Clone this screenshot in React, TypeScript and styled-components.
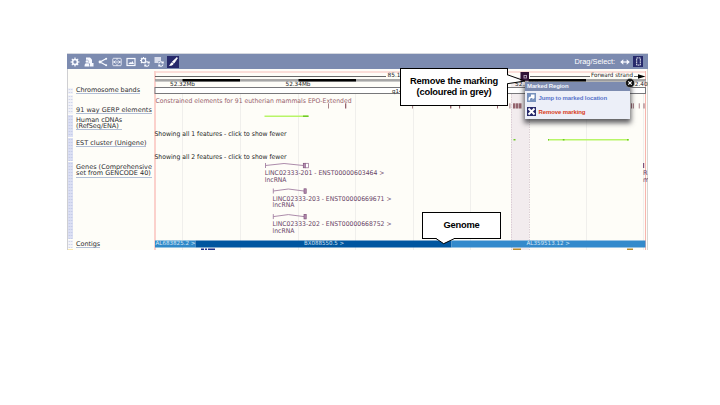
import React from "react";
import styled, { createGlobalStyle } from "styled-components";

const Global = createGlobalStyle`
  * { box-sizing: border-box; }
  body { margin: 0; background: #fff; }
`;

const Page = styled.main`
  width: 720px;
  height: 405px;
  padding: 53px 0 0 67px;
  overflow: hidden;
  background: #fff;
`;
const Browser = styled.section`
  position: relative;
  width: 581px;
  height: 197px;
`;
const Toolbar = styled.header`
  display: flex;
  align-items: center;
  justify-content: space-between;
  height: 16px;
  padding: 0 4px 0 1px;
  border-top: 1px solid #d5d8df;
  background: #7c8bb0;
`;
const Tools = styled.div`
  display: flex;
  align-items: center;
`;
const Tool = styled.button<{ $active?: boolean; $narrow?: boolean }>`
  display: flex;
  align-items: center;
  justify-content: center;
  width: ${(p) => (p.$narrow ? 10 : 12)}px;
  height: ${(p) => (p.$narrow ? 11 : 12)}px;
  margin: 0 1px 0 ${(p) => (p.$narrow ? 1 : 0.95)}px;
  padding: 0;
  border: 0;
  background: ${(p) => (p.$active ? "#26296b" : "transparent")};
`;
const DragLabel = styled.span`
  margin-right: 3px;
  font: 7.4px/12px "Liberation Sans", Arial, sans-serif;
  color: #fff;
`;
const Body = styled.div`
  display: grid;
  grid-template-columns: 6px 81px 494px;
  height: 181px;
  overflow: hidden;
  background: #fefdf8;
`;
const Handles = styled.div`
  display: flex;
  flex-direction: column;
  gap: 1px;
  border-left: 1px solid #cfcfd2;
`;
const Handle = styled.div<{ $h: number; $tone: string; $plain?: boolean }>`
  flex: none;
  height: ${(p) => p.$h}px;
  background-color: ${(p) => p.$tone};
  background-image: ${(p) => (p.$plain ? "none" : "radial-gradient(circle, rgba(176, 184, 220, 0.6) 0.4px, transparent 1px)")};
  background-size: 2.5px 3px;
`;
const Labels = styled.div`
  display: flex;
  flex-direction: column;
  align-items: flex-start;
  padding: 18px 0 0 3px;
`;
const Label = styled.div<{ $gap: number; $spacing?: number }>`
  margin-bottom: ${(p) => p.$gap}px;
  border-bottom: 1px solid #b2bfd6;
  font: 6.5px/6.2px "DejaVu Sans", sans-serif;
  letter-spacing: ${(p) => p.$spacing ?? 0}px;
  white-space: nowrap;
  color: #2d2d32;
`;
const Plot = styled.svg`
  display: block;
`;
const Annotation = styled.text<{ $color?: string; $size?: number }>`
  font-family: "DejaVu Sans", sans-serif;
  font-size: ${(p) => p.$size ?? 6.5}px;
  fill: ${(p) => p.$color ?? "#242424"};
`;
const Popup = styled.aside`
  position: absolute;
  left: 458px;
  top: 29px;
  width: 105px;
  height: 37px;
  background: #eceff8;
  box-shadow: 0 3px 5px 1px rgba(40, 40, 45, 0.75);
`;
const PopupTitle = styled.div`
  height: 9px;
  padding-left: 2px;
  background: #7c8bb0;
  font: bold 6px/9.5px "Liberation Sans", Arial, sans-serif;
  letter-spacing: -0.12px;
  color: #f2f5fc;
`;
const PopupRow = styled.div<{ $color: string; $first?: boolean }>`
  display: flex;
  align-items: center;
  gap: 2.5px;
  height: 14px;
  padding-left: 2px;
  margin-top: ${(p) => (p.$first ? -0.5 : 0)}px;
  font: bold 6px/12px "Liberation Sans", Arial, sans-serif;
  letter-spacing: -0.11px;
  color: ${(p) => p.$color};
  white-space: nowrap;
`;
const Close = styled.svg`
  position: absolute;
  right: -5px;
  top: -4px;
`;
const Callout = styled.div<{ $x: number; $y: number; $w: number; $h: number }>`
  position: absolute;
  left: ${(p) => p.$x}px;
  top: ${(p) => p.$y}px;
  width: ${(p) => p.$w}px;
  height: ${(p) => p.$h}px;
  display: flex;
  align-items: center;
  justify-content: center;
  border: 1px solid #000;
  background: #fff;
  font: bold 9.33px/11px "Liberation Sans", Arial, sans-serif;
  letter-spacing: -0.22px;
  text-align: center;
  color: #000;
`;
const Tail = styled.svg<{ $x: number; $y: number }>`
  position: absolute;
  left: ${(p) => p.$x}px;
  top: ${(p) => p.$y}px;
`;

const Icon = ({ children, size = 10 }: { children: React.ReactNode; size?: number }) => (
  <svg width={size} height={size} viewBox="0 0 10 10" fill="none" stroke="#f7f9ff" strokeWidth="1.2">
    {children}
  </svg>
);

const toolIcons = [
  <>
    <circle cx="5" cy="5" r="2.5" strokeWidth="1.7" />
    <path d="M5 .5v2M5 7.5v2M.5 5h2M7.5 5h2M1.8 1.8l1.4 1.4M6.8 6.8l1.4 1.4M1.8 8.2l1.4-1.4M6.8 3.2l1.4-1.4" />
  </>,
  <>
    <path d="M2 .5h4l2 2v4H4.500L2 5z" fill="#f7f9ff" stroke="none" />
    <path d="M.5 9.500c0-3 1-3.500 2.500-3.500s2.500.5 2.500 3.500zM6 6h3.500v3.500H6z" fill="#f7f9ff" stroke="none" />
    <circle cx="3" cy="4.500" r="1.600" fill="#f7f9ff" stroke="#7c8bb0" strokeWidth=".5" />
  </>,
  <>
    <path d="M8 1.800L2 5l6 3.200" />
    <circle cx="8.200" cy="1.800" r="1" fill="#f7f9ff" stroke="none" />
    <circle cx="2" cy="5" r="1.400" fill="#f7f9ff" stroke="none" />
    <circle cx="8.200" cy="8.200" r="1" fill="#f7f9ff" stroke="none" />
  </>,
  <>
    <rect x=".8" y="1.300" width="8.400" height="7.400" rx=".8" strokeWidth=".8" />
    <path d="M5 1.300v2M5 6.700v2M1 5h8M3.500 3.500L2 5l1.500 1.500M6.500 3.500L8 5 6.500 6.500" strokeWidth=".8" />
  </>,
  <>
    <rect x="1" y="1.500" width="8" height="7" />
    <path d="M2.200 7l2-2 1 .8L6.500 4 8 7z" fill="#f7f9ff" stroke="none" />
  </>,
  <>
    <circle cx="3.500" cy="3.500" r="2.200" />
    <path d="M3.500 0v1.500M0 3.500h1.500M1 1l1.200 1.200M6 1L5 2M1 6l1-1" />
    <path d="M4.800 6.500a2.200 2.200 0 0 1 4-.7M9 7.500a2.200 2.200 0 0 1-4 .8M9.200 4.500V6H7.500M4.800 9.500V8h1.500" strokeWidth="1.1" />
  </>,
  <>
    <path d="M.5 1h6.500M.5 3h6.500M.5 5h4" strokeWidth="1.300" />
    <path d="M4.800 6.500a2.200 2.200 0 0 1 4-.7M9 7.500a2.200 2.200 0 0 1-4 .8M9.200 4.500V6H7.500M4.800 9.500V8h1.500" strokeWidth="1.1" />
  </>,
  <>
    <path d="M9 .5L9.500 1 6 6.300 4.300 4.800z" fill="#fff" stroke="#fff" strokeWidth=".7" />
    <path d="M4 5.200l1.500 1.500C5 8.500 3 9 .8 8.700 2.300 8 2.300 6 4 5.200z" fill="#fff" stroke="none" />
  </>,
];

const gridLines = [182.5, 240.5, 298.5, 355.5, 413.5, 470.5, 586.5, 643.5];
const conserved: [number, number][] = [
  [328, 0.8], [345, 1.3], [412, 0.8], [450, 1.4], [459, 1.1], [497, 1],
  [509.500, 0.8], [513, 2], [515.500, 3], [519, 2.500], [631, 1], [632.800, 1], [638.800, 0.8], [643.500, 1],
];

interface Transcript {
  x: number;
  y: number;
  end: number;
  name: string;
  textEnd: number;
  open?: boolean;
}
const transcripts: Transcript[] = [
  { x: 264.8, y: 165.5, end: 308.8, name: "LINC02333-201 - ENST00000603464 >", textEnd: 384.5, open: true },
  { x: 272.6, y: 191, end: 306.5, name: "LINC02333-203 - ENST00000669671 >", textEnd: 391.5 },
  { x: 272.6, y: 216.6, end: 306.5, name: "LINC02333-202 - ENST00000668752 >", textEnd: 391.5 },
];

const TranscriptGlyph = ({ x, y, end, name, textEnd, open }: Transcript) => {
  const exon = open ? end - 5.5 : end - 2.5;
  return (
    <g>
      <path
        d={`M${x + 0.7} ${y - 2.5}v5M${x + 0.7} ${y}L${(x + exon) / 2} ${y - 2}L${exon} ${y}`}
        fill="none" stroke="#a37fa2" strokeWidth=".9"
      />
      <rect x={exon} y={y - 2.2} width="2.2" height="4.500" fill="#b58eb1" stroke="#7e5079" strokeWidth=".7" />
      {open && <rect x={end - 3.300} y={y - 2.200} width="3" height="4.500" fill="#fff" stroke="#936a91" strokeWidth=".7" />}
      <Annotation x={x} y={y + 9.7} textLength={textEnd - x} lengthAdjust="spacingAndGlyphs" $color="#684466">{name}</Annotation>
      <Annotation x={x} y={y + 16} textLength={21.7} lengthAdjust="spacingAndGlyphs" $color="#684466">lncRNA</Annotation>
    </g>
  );
};

export default function App() {
  return (
    <Page>
      <Global />
      <Browser>
        <Toolbar>
          <Tools>
            {toolIcons.map((icon, i) => (
              <Tool key={i} $active={i === 7}><Icon>{icon}</Icon></Tool>
            ))}
          </Tools>
          <Tools>
            <DragLabel>Drag/Select:</DragLabel>
            <Tool>
              <Icon><path d="M1 5h8" /><path d="M3.300 2.200L.2 5l3.100 2.800zM6.700 2.200L9.800 5 6.700 7.800z" fill="#f7f9ff" stroke="none" /></Icon>
            </Tool>
            <Tool $active $narrow>
              <Icon size={9}><path d="M3 1h4v8H3z" strokeDasharray="2 .6" strokeWidth="1" /></Icon>
            </Tool>
          </Tools>
        </Toolbar>
        <Body>
          <Handles>
            <Handle $h={18} $tone="#fefdf8" $plain />
            <Handle $h={6} $tone="#f1f2f8" />
            <Handle $h={19} $tone="#f1f2f8" />
            <Handle $h={22} $tone="#dbdff3" />
            <Handle $h={23} $tone="#dbdff3" />
            <Handle $h={77} $tone="#dbdff3" />
            <Handle $h={8} $tone="#f3f4f9" />
            <Handle $h={2} $tone="#fae8ae" $plain />
          </Handles>
          <Labels>
            <Label $gap={13} $spacing={-0.06}>Chromosome bands</Label>
            <Label $gap={2.3} $spacing={0.02}>91 way GERP elements</Label>
            <Label $gap={10} $spacing={-0.06}>Human cDNAs<br />(RefSeq/ENA)</Label>
            <Label $gap={16.800}>EST cluster (Unigene)</Label>
            <Label $gap={63.4} $spacing={0}>Genes (Comprehensive<br />set from GENCODE 40)</Label>
            <Label $gap={0} $spacing={-0.06}>Contigs</Label>
          </Labels>
          <Plot width="494" height="181" viewBox="154 69 494 181">
            <rect x="511" y="77" width="18" height="173" fill="#f2ecee" />
            {gridLines.map((x) => <path key={x} d={`M${x} 94V250`} stroke="#f0efec" strokeWidth="1" />)}
            <path d="M511.500 94V250M529.500 94V250" stroke="#d8cad1" strokeWidth=".9" strokeDasharray="1.500 1" />
            <rect x="154" y="71" width="492" height="2" fill="#fbded9" />
            <rect x="154" y="71" width="2" height="179" fill="#fbd1cc" />
            <rect x="645" y="71" width="1" height="179" fill="#f7b5ae" />
            <rect x="647" y="69" width="1" height="181" fill="#d7d6d3" />

            <path d="M155 76.500H386M530 76.500H590M634 76.500H641" stroke="#555" strokeWidth=".9" />
            <path d="M638 74.200L645.500 76.500L638 78.800z" fill="#000" />
            <Annotation x="387.500" y="77" $size={5.800}>85.10 kb</Annotation>
            <Annotation x="591" y="76.700" $size={6} textLength={42} lengthAdjust="spacingAndGlyphs">Forward strand</Annotation>
            <rect x="155" y="79.500" width="491" height="2.200" fill="#b4b4b4" />
            <path d="M155 79.800H646" stroke="#666" strokeWidth=".6" />
            {[182.5, 298.5, 413.5, 528.5].map((x) => <rect key={x} x={x} y="79" width="57.500" height="2.500" fill="#000" />)}
            <Annotation x="170" y="86.400" $size={5.800} textLength={25} lengthAdjust="spacingAndGlyphs">52.32Mb</Annotation>
            <Annotation x="285.500" y="86.400" $size={5.800} textLength={25} lengthAdjust="spacingAndGlyphs">52.34Mb</Annotation>
            <Annotation x="515" y="86.400" $size={5.800}>52.38Mb</Annotation>
            <Annotation x="631" y="86.400" $size={5.800}>52.40Mb</Annotation>
            <rect x="155" y="87.500" width="490.500" height="6" fill="#fff" stroke="#77777a" strokeWidth="1" />
            <Annotation x="392" y="92.500" $size={5.500}>q14.3</Annotation>

            <Annotation x="155.500" y="102.700" textLength={196} lengthAdjust="spacingAndGlyphs" $color="#96616b">
              Constrained elements for 91 eutherian mammals EPO-Extended
            </Annotation>
            {conserved.map(([x, w]) => <rect key={x} x={x} y="103.300" width={w} height="5.200" fill="#94646d" />)}
            <path d="M264.500 116.300H308.500M548 139.700H629" stroke="#b8f568" strokeWidth="1.500" />
            <path d="M303 116.300H308.500M562.800 139.700H564.500M548 139.700H549M627 139.700H628.500M513.500 139.700H515.500" stroke="#6fc928" strokeWidth="1.500" />
            <Annotation x="154.500" y="135.500" textLength={132} lengthAdjust="spacingAndGlyphs">Showing all 1 features - click to show fewer</Annotation>
            <Annotation x="154.500" y="159" textLength={132} lengthAdjust="spacingAndGlyphs">Showing all 2 features - click to show fewer</Annotation>
            {transcripts.map((t) => <TranscriptGlyph key={t.name} {...t} />)}
            <rect x="643" y="163" width="1.200" height="5" fill="#7e5079" />
            <Annotation x="643" y="175.200" $color="#684466">R</Annotation>
            <Annotation x="643" y="181.500" $color="#684466">m</Annotation>

            <rect x="155" y="240.500" width="40.500" height="7" fill="#3089c8" />
            <rect x="195.500" y="240.500" width="256" height="7" fill="#00569f" />
            <rect x="451.500" y="240.500" width="194" height="7" fill="#338acb" />
            <Annotation x="155.500" y="245.300" $size={5.700} $color="#d4e7f5" textLength={40} lengthAdjust="spacingAndGlyphs">AL683825.2 &gt;</Annotation>
            <Annotation x="304" y="245.300" $size={5.700} $color="#cfe1f1" textLength={40} lengthAdjust="spacingAndGlyphs">BX088550.5 &gt;</Annotation>
            <Annotation x="526.500" y="245.300" $size={5.700} $color="#d4e7f5" textLength={43.5} lengthAdjust="spacingAndGlyphs">AL359513.12 &gt;</Annotation>
            <path d="M201 249.200h3M205 249.200h2M208 249.200h7" stroke="#20338b" strokeWidth="1.500" />
            <path d="M513 249.200h8M627 249.200h6" stroke="#b98c2d" strokeWidth="1.600" />
          </Plot>
        </Body>

        <Callout $x={333} $y={15} $w={108} $h={38}>Remove the marking<br />(coloured in grey)</Callout>
        <Tail $x={440} $y={18} width="22" height="16" viewBox="507 71 22 16">
          <path d="M507 75L525 81L507 83.500" fill="#fff" />
          <rect x="520.500" y="72" width="8.500" height="8.800" fill="#301136" />
          <rect x="524" y="75.500" width="2.500" height="2.500" fill="none" stroke="#b8a4bd" strokeWidth=".9" />
          <path d="M507.500 74.800L525 81L507.500 83.700" fill="none" stroke="#000" />
        </Tail>
        <Popup>
          <PopupTitle>Marked Region</PopupTitle>
          <PopupRow $color="#5975cb" $first>
            <svg width="9" height="9" viewBox="0 0 9 9"><rect width="9" height="9" fill="#7691bd" /><path d="M1.500 7.500V5.500Q1.500 3.500 4 3.500V1.500H7.500V5L5.500 6.500V5H4Q2.800 5 2.800 7.500z" fill="#fff" /></svg>
            Jump to marked location
          </PopupRow>
          <PopupRow $color="#d83d22">
            <svg width="9" height="9" viewBox="0 0 9 9"><rect width="9" height="9" fill="#26296b" /><path d="M1.500 1.500L7.500 7.500M7.500 1.500L1.500 7.500" stroke="#fff" strokeWidth="1.900" /></svg>
            Remove marking
          </PopupRow>
          <Close width="10" height="10" viewBox="0 0 10 10">
            <circle cx="5" cy="5" r="4.500" fill="#111" stroke="#eee" strokeWidth=".4" />
            <path d="M3.300 3.300L6.700 6.700M6.700 3.300L3.300 6.700" stroke="#fff" strokeWidth="1.200" />
          </Close>
        </Popup>
        <Callout $x={355} $y={159} $w={79} $h={27}>Genome</Callout>
        <Tail $x={368} $y={184} width="22" height="9" viewBox="435 237 22 9">
          <path d="M436.500 237H454V239L443.500 243.500L436.500 239z" fill="#fff" />
          <path d="M436 238.500L443.700 243.700L454.500 238.500" fill="none" stroke="#000" />
        </Tail>
      </Browser>
    </Page>
  );
}
